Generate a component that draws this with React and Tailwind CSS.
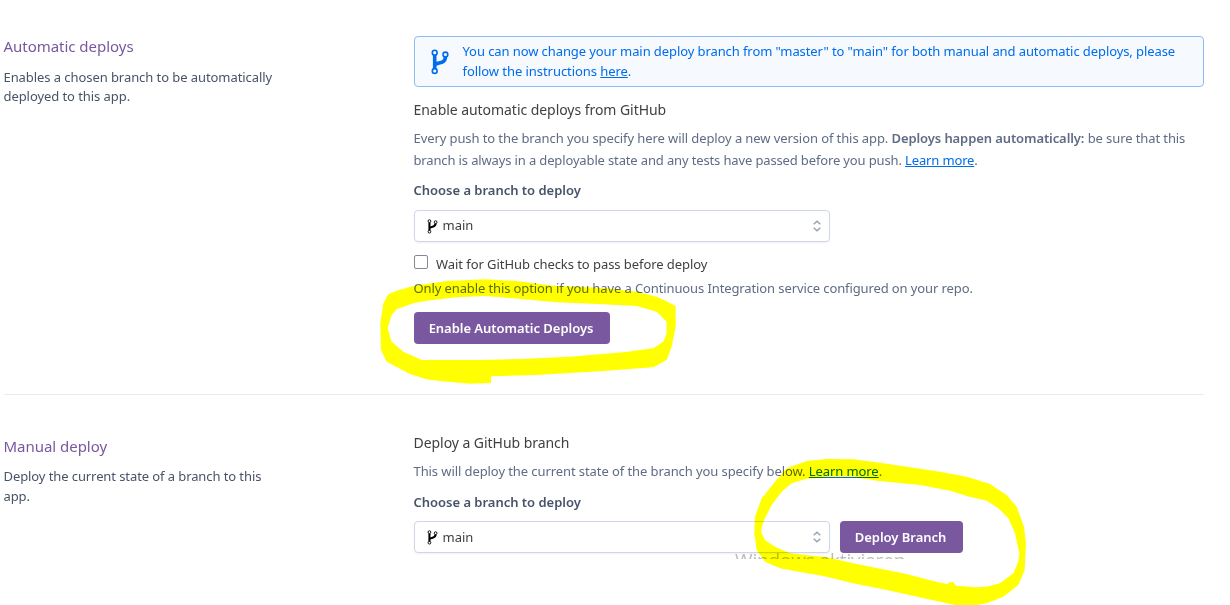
function BranchIcon({ className }) {
  return (
    <svg viewBox="0 0 18 26" className={className} fill="none" stroke="currentColor">
      <path d="M3.7 6V20M3.7 16.2C5.5 12.8 14.4 15.5 14.4 8" strokeWidth="3.6" />
      <circle cx="3.7" cy="3.7" r="2.4" strokeWidth="1.6" />
      <circle cx="14.4" cy="5.5" r="2.4" strokeWidth="1.6" />
      <circle cx="3.7" cy="22" r="2.4" strokeWidth="1.6" />
    </svg>
  );
}

function BranchSelect({ labelClass = "-mt-px" }) {
  return (
    <div className="flex h-8 w-[416px] shrink-0 items-center rounded border border-[#cfd7e6] bg-white pl-[11.5px] pr-2 shadow-[0_1px_2px_rgba(0,0,0,0.06)]">
      <BranchIcon className="h-[15px] w-[11px] text-black" />
      <span className={`ml-[5px] text-[13px] leading-5 text-[#3f3f44] ${labelClass}`}>main</span>
      <svg viewBox="0 0 8 12" className="ml-auto h-3 w-2" fill="none" stroke="#96a3b6" strokeWidth="1.5">
        <path d="M.7 4.2 4 1.2l3.3 3M.7 7.8 4 10.8l3.3-3" />
      </svg>
    </div>
  );
}

function Highlights() {
  return (
    <svg viewBox="0 0 1230 605" className="pointer-events-none absolute inset-0 h-[605px] w-[1230px] mix-blend-multiply" fill="#ffff00" fillRule="evenodd">
      <path
        transform="translate(370 180) scale(.33333)"
        d="M31 430 40 370 55 343 80 332 130 318 230 303 345 298 440 303 550 317 700 324 800 335 860 350 890 364 917 378 917 440 905 500 890 540 850 562 700 573 500 585 363 589V609L300 611 210 603 170 598 120 582 50 545 33 510Z M53 445 65 405 80 388 130 370 170 362 260 352 345 348 430 355 560 367 700 373 800 378 860 395 890 425 890 460 880 485 850 505 760 517 600 530 450 537 330 540 155 540 100 515 65 485Z"
      />
      <path
        transform="translate(720 450) scale(.33333)"
        d="M103 250 105 200 125 145 165 95 200 55 260 33 320 27 400 28 480 38 560 50 660 65 740 80 810 102 860 135 890 170 912 230 918 280 914 360 895 405 850 440 800 460 770 465 705 465 660 455 500 420 400 400 310 378 240 366 180 355 135 335 110 300Z M123 245 130 215 155 165 185 125 215 100 260 86 330 80 400 80 470 92 600 105 690 122 740 138 800 152 835 175 865 205 885 250 898 310 895 335 880 370 840 400 800 410 770 412 708 407 700 396 690 397 680 402 640 393 550 370 450 350 380 335 320 322 210 310 165 290 135 270Z"
      />
    </svg>
  );
}

export default function App() {
  return (
    <div className="relative h-[605px] w-[1230px] overflow-hidden bg-white font-['Noto_Sans','Open_Sans',sans-serif] text-[13px] whitespace-nowrap">
      <section className="ml-1 flex h-[395px] w-[1200px] border-b border-[#e6ebf0] pt-9">
        <div className="-ml-[0.5px] w-[410px] shrink-0">
          <h2 className="-mt-px text-[15px] leading-[22px] tracking-[-0.03px] text-[#79589f]">Automatic deploys</h2>
          <p className="mt-[10px] leading-[20px] tracking-[-0.07px] text-[#475468]">Enables a chosen branch to be automatically</p>
          <p className="-mt-px leading-5 tracking-[-0.07px] text-[#475468]">deployed to this app.</p>
        </div>
        <div className="w-[790.5px]">
          <div className="ml-[0.5px] flex h-[51px] items-center rounded-[4px] border border-[#8cbcf2] bg-[#f6f9fe] pl-4 text-[#006deb]">
            <BranchIcon className="h-[26px] w-[18px]" />
            <p className="-mt-[2px] ml-[13.5px] leading-5 tracking-[-0.09px]">You can now change your main deploy branch from "master" to "main" for both manual and automatic deploys, please<br /><span className="tracking-[-0.06px]">follow the instructions <a className="underline underline-offset-1">here</a>.</span></p>
          </div>
          <h3 className="mt-[13px] text-[14px] leading-5 tracking-[-0.05px] text-[#3f3f44]">Enable automatic deploys from GitHub</h3>
          <p className="mt-[7px] leading-[22px] tracking-[-0.092px] text-[#5f6c85]">Every push to the branch you specify here will deploy a new version of this app. <b className="font-semibold">Deploys happen automatically:</b> be sure that this<br /><span className="tracking-[-0.14px]">branch is always in a deployable state and any tests have passed before you push. <a className="text-[#006deb] underline underline-offset-1">Learn more</a>.</span></p>
          <h4 className="mt-[9px] mb-[10px] leading-5 font-semibold tracking-[-0.02px] text-[#475468]">Choose a branch to deploy</h4>
          <div className="pl-[0.5px]"><BranchSelect labelClass="-mt-[2px]" /></div>
          <label className="mt-3 flex h-5 items-start pl-[0.5px]">
            <span className="mt-[1px] h-[14px] w-[14px] rounded-[2px] border border-[#8a8794] bg-white" />
            <span className="ml-2 leading-[21px] tracking-[-0.06px] text-[#3f3f44]">Wait for GitHub checks to pass before deploy</span>
          </label>
          <p className="mt-1 leading-5 tracking-[-0.11px] text-[#5f6c85]">Only enable this option if you have a Continuous Integration service configured on your repo.</p>
          <button className="mt-[14px] ml-[0.5px] block h-8 w-[196px] rounded-[4px] bg-[#79589f] pt-[2px] pr-[2px] font-semibold tracking-[-0.03px] text-white">Enable Automatic Deploys</button>
        </div>
      </section>
      <section className="ml-1 flex w-[1200px] pt-[38px]">
        <div className="-ml-[0.5px] w-[410px] shrink-0">
          <h2 className="mt-[2px] text-[15px] leading-[22px] tracking-[-0.03px] text-[#79589f]">Manual deploy</h2>
          <p className="mt-[9px] leading-5 tracking-[-0.09px] text-[#475468]">Deploy the current state of a branch to this<br />app.</p>
        </div>
        <div>
          <h3 className="text-[14px] leading-5 tracking-[-0.05px] text-[#3f3f44]">Deploy a GitHub branch</h3>
          <p className="mt-[8px] leading-5 tracking-[-0.085px] text-[#5f6c85]">This will deploy the current state of the branch you specify below. <a className="text-[#006deb] underline underline-offset-1">Learn more</a>.</p>
          <h4 className="mt-[11px] mb-[9px] leading-5 font-semibold tracking-[-0.02px] text-[#475468]">Choose a branch to deploy</h4>
          <div className="flex gap-[10px] pl-[0.5px]">
            <BranchSelect />
            <button className="h-8 w-[123px] rounded-[4px] bg-[#79589f] pt-[2px] pr-[2px] font-semibold tracking-[-0.03px] text-white">Deploy Branch</button>
          </div>
        </div>
      </section>
      <div className="absolute left-[735px] top-[553px] h-[6px] overflow-hidden">
        <div className="-mt-[7px] font-['Open_Sans'] text-[19px] leading-[28px] tracking-[-0.15px] text-[#bcbcbc]">Windows aktivieren</div>
      </div>
      <Highlights />
    </div>
  );
}
